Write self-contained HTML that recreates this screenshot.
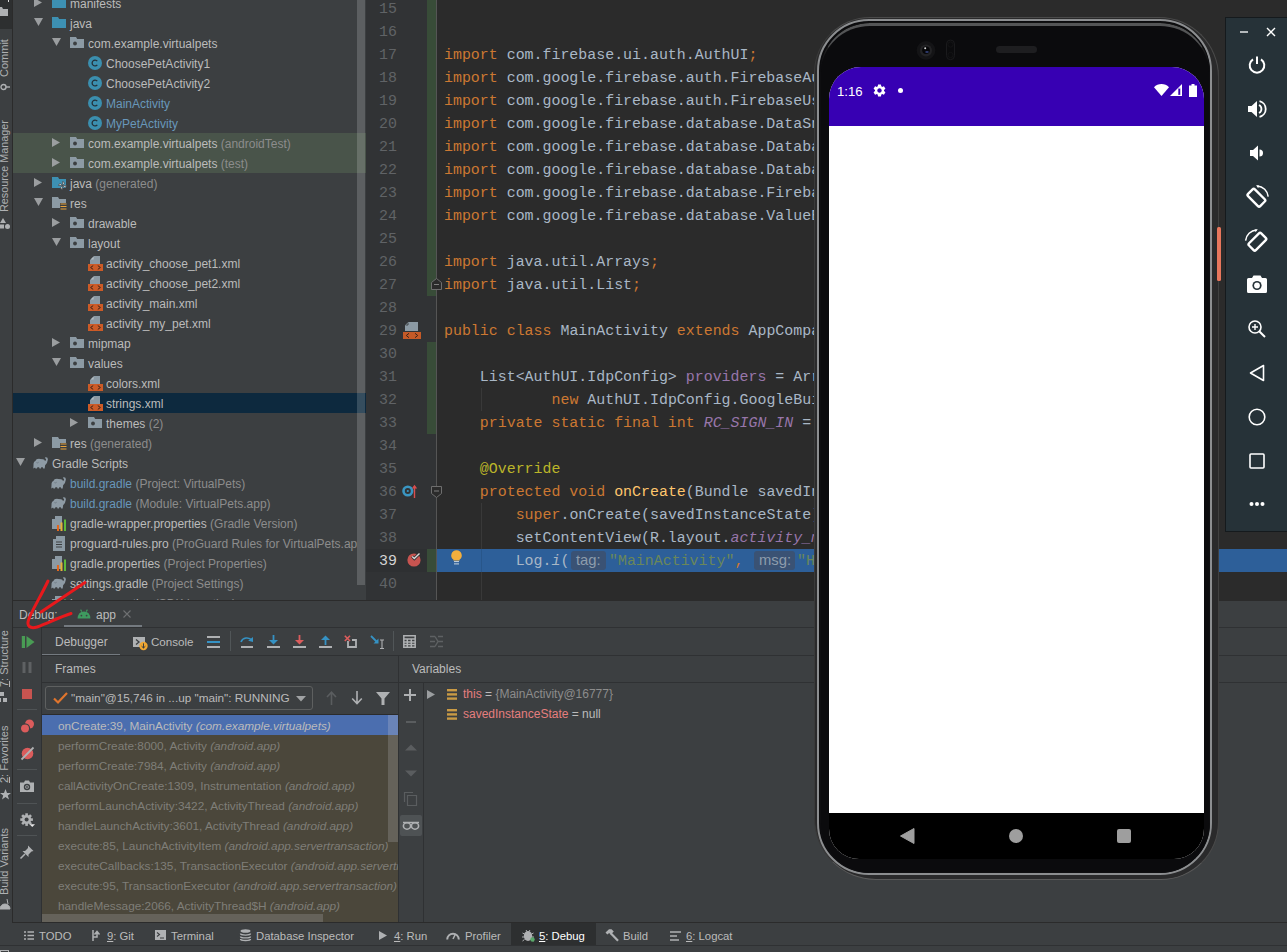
<!DOCTYPE html><html><head><meta charset="utf-8"><style>
*{margin:0;padding:0;box-sizing:border-box}
html,body{width:1287px;height:952px;overflow:hidden;background:#3C3F41}
body{position:relative;font-family:"Liberation Sans",sans-serif;font-size:12px;color:#BBBBBB}
.a{position:absolute}
svg{position:absolute;overflow:visible}
.t{position:absolute;white-space:pre;line-height:20px}
.g{color:#8C8C8C}
.bl{color:#6897BB}
.code{font-family:"Liberation Mono",monospace;font-size:14.93px;white-space:pre;position:absolute;line-height:23px;color:#A9B7C6}
.k{color:#CC7832}
.f{color:#9876AA}
.fi{color:#9876AA;font-style:italic}
.an{color:#BBB529}
.fn{color:#FFC66D}
.s{color:#6A8759}
.ln{font-family:"Liberation Mono",monospace;font-size:14.93px;color:#606366;position:absolute;line-height:23px;text-align:right;width:40px}
</style></head><body>

<svg width="0" height="0" style="position:absolute">
<defs>
<symbol id="tr" viewBox="0 0 8 9"><polygon points="0,0 8,4.5 0,9" fill="#9B9EA0"/></symbol>
<symbol id="td" viewBox="0 0 9 8"><polygon points="0,0 9,0 4.5,8" fill="#9B9EA0"/></symbol>
<symbol id="fb" viewBox="0 0 14 11"><path d="M0 0h6l1.2 2H14v9H0z" fill="#3D90B2"/></symbol>
<symbol id="fg" viewBox="0 0 14 11"><path d="M0 0h6l1.2 2H14v9H0z" fill="#8C9AA4"/></symbol>
<symbol id="fp" viewBox="0 0 14 11"><path d="M0 0h6l1.2 2H14v9H0z" fill="#8C9AA4"/><circle cx="5" cy="6.5" r="1.9" fill="#3C3F41"/></symbol>
<symbol id="cls" viewBox="0 0 14 14"><circle cx="7" cy="7" r="7" fill="#3B8FAF"/><path d="M9.3 5.2A2.9 2.9 0 1 0 9.3 8.8" fill="none" stroke="#23313A" stroke-width="1.3"/></symbol>
<symbol id="xml" viewBox="0 0 16 16"><path d="M7 1H13V9H3V5z" fill="#8C9AA4"/><path d="M3.6 4.6L6.6 1.6V4.6z" fill="#B4BEC4"/><rect x="1" y="9" width="15" height="7" fill="#CC5B27"/><path d="M6.2 10.6L3.6 12.5 6.2 14.4M10.8 10.6L13.4 12.5 10.8 14.4" fill="none" stroke="#3C2318" stroke-width="1"/></symbol>
<symbol id="ele" viewBox="0 0 15 12"><path d="M0.3 11.6L0.6 6.2Q0.9 4.4 2.4 3.9L3.3 2.6Q4.4 1.7 7 1.9L10 2.3Q11.6 2.6 12 4.1Q12.9 3.5 13.1 2.2Q13.1 1.3 12.2 1.4L11.9 0.5Q14.9 -0.3 14.9 2.6Q14.6 6.2 12.1 8.2L11.7 11.6H10.2L9.8 10.2H8.2L7.9 11.6H6.5L6.1 10.2H4.4L4 11.6H2.4L2.1 10.4z" fill="#8E9BA5"/><path d="M3.4 5.6Q4.6 6.4 5.7 5.2" fill="none" stroke="#5F6A72" stroke-width="0.6"/></symbol>
<symbol id="prop" viewBox="0 0 16 16"><path d="M4 1h7v13H1V4z" fill="#8C9AA4"/><path d="M1 1h3v3H1z" fill="#3C3F41"/><rect x="6" y="10" width="2" height="6" fill="#E3671E"/><rect x="9.5" y="7.5" width="2" height="8.5" fill="#E8B13A"/><rect x="13" y="4.5" width="2" height="11.5" fill="#5DBA3A"/></symbol>
<symbol id="txt" viewBox="0 0 16 16"><path d="M5 1h9v15H2V4z" fill="#8C9AA4"/><path d="M2 1h3v3H2z" fill="#3C3F41"/><path d="M5 7h6M5 9.5h6M5 12h6" stroke="#3C3F41" stroke-width="1"/></symbol>
</defs></svg>

<div class="a" style="left:13px;top:0;width:353px;height:600px;background:#3C3F41;overflow:hidden">
<div class="a" style="left:0;top:133px;width:353px;height:40px;background:#49544A"></div>
<div class="a" style="left:0;top:393px;width:353px;height:20px;background:#0D293E"></div>
<div class="a" style="left:0;top:0;width:344px;height:600px;overflow:hidden">
<svg style="left:21px;top:-2px" width="8" height="9"><use href="#tr" width="8" height="9"/></svg>
<svg style="left:39px;top:-3px" width="14" height="11"><use href="#fb" width="14" height="11"/></svg>
<div class="t" style="left:57px;top:-6px">manifests</div>
<svg style="left:21px;top:18px" width="9" height="8"><use href="#td" width="9" height="8"/></svg>
<svg style="left:39px;top:17px" width="14" height="11"><use href="#fb" width="14" height="11"/></svg>
<div class="t" style="left:57px;top:14px">java</div>
<svg style="left:39px;top:38px" width="9" height="8"><use href="#td" width="9" height="8"/></svg>
<svg style="left:57px;top:37px" width="14" height="11"><use href="#fp" width="14" height="11"/></svg>
<div class="t" style="left:75px;top:34px">com.example.virtualpets</div>
<svg style="left:75px;top:56px" width="14" height="14"><use href="#cls" width="14" height="14"/></svg>
<div class="t" style="left:93px;top:54px">ChoosePetActivity1</div>
<svg style="left:75px;top:76px" width="14" height="14"><use href="#cls" width="14" height="14"/></svg>
<div class="t" style="left:93px;top:74px">ChoosePetActivity2</div>
<svg style="left:75px;top:96px" width="14" height="14"><use href="#cls" width="14" height="14"/></svg>
<div class="t" style="left:93px;top:94px"><span class="bl">MainActivity</span></div>
<svg style="left:75px;top:116px" width="14" height="14"><use href="#cls" width="14" height="14"/></svg>
<div class="t" style="left:93px;top:114px"><span class="bl">MyPetActivity</span></div>
<svg style="left:39px;top:138px" width="8" height="9"><use href="#tr" width="8" height="9"/></svg>
<svg style="left:57px;top:137px" width="14" height="11"><use href="#fp" width="14" height="11"/></svg>
<div class="t" style="left:75px;top:134px">com.example.virtualpets <span class="g">(androidTest)</span></div>
<svg style="left:39px;top:158px" width="8" height="9"><use href="#tr" width="8" height="9"/></svg>
<svg style="left:57px;top:157px" width="14" height="11"><use href="#fp" width="14" height="11"/></svg>
<div class="t" style="left:75px;top:154px">com.example.virtualpets <span class="g">(test)</span></div>
<svg style="left:21px;top:178px" width="8" height="9"><use href="#tr" width="8" height="9"/></svg>
<svg style="left:39px;top:177px" width="14" height="11"><use href="#fb" width="14" height="11"/></svg>
<svg style="left:45px;top:181px" width="9" height="9" viewBox="0 0 9 9"><g fill="#B9C1C6" stroke="#3C3F41" stroke-width="0.6"><path d="M4.5 4.5L4.5 0.5A2 2 0 0 1 6.5 2.5z"/><path d="M4.5 4.5L8.5 4.5A2 2 0 0 1 6.5 6.5z"/><path d="M4.5 4.5L4.5 8.5A2 2 0 0 1 2.5 6.5z"/><path d="M4.5 4.5L0.5 4.5A2 2 0 0 1 2.5 2.5z"/></g></svg>
<div class="t" style="left:57px;top:174px">java <span class="g">(generated)</span></div>
<svg style="left:21px;top:198px" width="9" height="8"><use href="#td" width="9" height="8"/></svg>
<svg style="left:39px;top:197px" width="14" height="11"><use href="#fg" width="14" height="11"/></svg>
<div class="a" style="left:47px;top:203px;width:7px;height:8px;background:#3C3F41"></div>
<svg style="left:47px;top:203px" width="7" height="8" viewBox="0 0 7 8"><path d="M0.5 1h6M0.5 3.5h6M0.5 6h6" stroke="#E8A33C" stroke-width="1.1"/></svg>
<div class="t" style="left:57px;top:194px">res</div>
<svg style="left:39px;top:218px" width="8" height="9"><use href="#tr" width="8" height="9"/></svg>
<svg style="left:57px;top:217px" width="14" height="11"><use href="#fp" width="14" height="11"/></svg>
<div class="t" style="left:75px;top:214px">drawable</div>
<svg style="left:39px;top:238px" width="9" height="8"><use href="#td" width="9" height="8"/></svg>
<svg style="left:57px;top:237px" width="14" height="11"><use href="#fp" width="14" height="11"/></svg>
<div class="t" style="left:75px;top:234px">layout</div>
<svg style="left:74px;top:255px" width="16" height="16"><use href="#xml" width="16" height="16"/></svg>
<div class="t" style="left:93px;top:254px">activity_choose_pet1.xml</div>
<svg style="left:74px;top:275px" width="16" height="16"><use href="#xml" width="16" height="16"/></svg>
<div class="t" style="left:93px;top:274px">activity_choose_pet2.xml</div>
<svg style="left:74px;top:295px" width="16" height="16"><use href="#xml" width="16" height="16"/></svg>
<div class="t" style="left:93px;top:294px">activity_main.xml</div>
<svg style="left:74px;top:315px" width="16" height="16"><use href="#xml" width="16" height="16"/></svg>
<div class="t" style="left:93px;top:314px">activity_my_pet.xml</div>
<svg style="left:39px;top:338px" width="8" height="9"><use href="#tr" width="8" height="9"/></svg>
<svg style="left:57px;top:337px" width="14" height="11"><use href="#fp" width="14" height="11"/></svg>
<div class="t" style="left:75px;top:334px">mipmap</div>
<svg style="left:39px;top:358px" width="9" height="8"><use href="#td" width="9" height="8"/></svg>
<svg style="left:57px;top:357px" width="14" height="11"><use href="#fp" width="14" height="11"/></svg>
<div class="t" style="left:75px;top:354px">values</div>
<svg style="left:74px;top:375px" width="16" height="16"><use href="#xml" width="16" height="16"/></svg>
<div class="t" style="left:93px;top:374px">colors.xml</div>
<svg style="left:74px;top:395px" width="16" height="16"><use href="#xml" width="16" height="16"/></svg>
<div class="t" style="left:93px;top:394px">strings.xml</div>
<svg style="left:57px;top:418px" width="8" height="9"><use href="#tr" width="8" height="9"/></svg>
<svg style="left:75px;top:417px" width="14" height="11"><use href="#fp" width="14" height="11"/></svg>
<div class="t" style="left:93px;top:414px">themes <span class="g">(2)</span></div>
<svg style="left:21px;top:438px" width="8" height="9"><use href="#tr" width="8" height="9"/></svg>
<svg style="left:39px;top:437px" width="14" height="11"><use href="#fg" width="14" height="11"/></svg>
<div class="a" style="left:47px;top:443px;width:7px;height:8px;background:#3C3F41"></div>
<svg style="left:47px;top:443px" width="7" height="8" viewBox="0 0 7 8"><path d="M0.5 1h6M0.5 3.5h6M0.5 6h6" stroke="#E8A33C" stroke-width="1.1"/></svg>
<div class="t" style="left:57px;top:434px">res <span class="g">(generated)</span></div>
<svg style="left:3px;top:458px" width="9" height="8"><use href="#td" width="9" height="8"/></svg>
<svg style="left:20px;top:457px" width="15" height="12"><use href="#ele" width="15" height="12"/></svg>
<div class="t" style="left:39px;top:454px">Gradle Scripts</div>
<svg style="left:38px;top:477px" width="15" height="12"><use href="#ele" width="15" height="12"/></svg>
<div class="t" style="left:57px;top:474px"><span class="bl">build.gradle</span> <span class="g">(Project: VirtualPets)</span></div>
<svg style="left:38px;top:497px" width="15" height="12"><use href="#ele" width="15" height="12"/></svg>
<div class="t" style="left:57px;top:494px"><span class="bl">build.gradle</span> <span class="g">(Module: VirtualPets.app)</span></div>
<svg style="left:38px;top:515px" width="16" height="16"><use href="#prop" width="16" height="16"/></svg>
<div class="t" style="left:57px;top:514px">gradle-wrapper.properties <span class="g">(Gradle Version)</span></div>
<svg style="left:38px;top:535px" width="16" height="16"><use href="#txt" width="16" height="16"/></svg>
<div class="t" style="left:57px;top:534px">proguard-rules.pro <span class="g">(ProGuard Rules for VirtualPets.app)</span></div>
<svg style="left:38px;top:555px" width="16" height="16"><use href="#prop" width="16" height="16"/></svg>
<div class="t" style="left:57px;top:554px">gradle.properties <span class="g">(Project Properties)</span></div>
<svg style="left:38px;top:577px" width="15" height="12"><use href="#ele" width="15" height="12"/></svg>
<div class="t" style="left:57px;top:574px">settings.gradle <span class="g">(Project Settings)</span></div>
<svg style="left:38px;top:595px" width="16" height="16"><use href="#prop" width="16" height="16"/></svg>
<div class="t" style="left:57px;top:594px">local.properties <span class="g">(SDK Location)</span></div>
</div>
<div class="a" style="left:344px;top:0;width:8px;height:585px;background:rgba(255,255,255,0.17)"></div>
</div>
<div class="a" style="left:366px;top:0;width:71px;height:600px;background:#313335"></div>
<div class="a" style="left:366px;top:549px;width:61px;height:23px;background:#2E3032"></div>
<div class="a" style="left:437px;top:0;width:850px;height:600px;background:#2B2B2B;overflow:hidden">
<div class="a" style="left:0;top:549px;width:850px;height:23px;background:#2D5F99"></div>
</div>
<div class="a" style="left:481px;top:388px;width:1px;height:23px;background:#393939"></div>
<div class="a" style="left:481px;top:503px;width:1px;height:46px;background:#393939"></div>
<div class="a" style="left:481px;top:549px;width:1px;height:23px;background:#28568A"></div>
<div class="a" style="left:481px;top:572px;width:1px;height:28px;background:#393939"></div>
<div class="a" style="left:436px;top:0;width:1px;height:600px;background:#555555"></div>
<div class="a" style="left:427px;top:0;width:9px;height:296px;background:#384C38"></div>
<div class="a" style="left:427px;top:342px;width:9px;height:92px;background:#384C38"></div>
<div class="a" style="left:427px;top:549px;width:9px;height:23px;background:#384C38"></div>
<svg style="left:431px;top:278px" width="11" height="12" viewBox="0 0 11 12"><path d="M0.5 11.5V4.5L5.5 0.5 10.5 4.5V11.5z" fill="#2B2B2B" stroke="#6E6E6E" stroke-width="1"/><path d="M3 6.5H8" stroke="#7E7E7E" stroke-width="1"/></svg>
<svg style="left:431px;top:486px" width="11" height="12" viewBox="0 0 11 12"><path d="M0.5 0.5V7.5L5.5 11.5 10.5 7.5V0.5z" fill="#2B2B2B" stroke="#6E6E6E" stroke-width="1"/><path d="M3 5H8" stroke="#7E7E7E" stroke-width="1"/></svg>
<svg style="left:403px;top:322px" width="18" height="17" viewBox="0 0 18 17"><path d="M5 0H15V9H2V3z" fill="#8C9AA4"/><path d="M2 0H5L2 3z" fill="#313335"/><path d="M2.5 3H5V0.5" fill="none" stroke="#313335" stroke-width="0.8"/><rect x="0" y="10" width="18" height="7" fill="#C55A27"/><path d="M6 11.3L3.3 13.5 6 15.7M12 11.3L14.7 13.5 12 15.7" fill="none" stroke="#3C2318" stroke-width="1"/></svg>
<svg style="left:402px;top:484px" width="18" height="15" viewBox="0 0 18 15"><circle cx="5.8" cy="7" r="4.3" fill="none" stroke="#3A96C2" stroke-width="2.6"/><circle cx="5.8" cy="7" r="1.1" fill="#3A96C2"/><path d="M12.5 14V2" stroke="#D94E4E" stroke-width="1.4"/><path d="M9.8 4.5L12.5 0.8 15.2 4.5z" fill="#D94E4E"/></svg>
<svg style="left:407px;top:552px" width="15" height="15" viewBox="0 0 15 15"><circle cx="7" cy="8" r="6.6" fill="#C75450"/><path d="M5.2 4.5L7.3 6.6 12.5 1.4" fill="none" stroke="#2E3032" stroke-width="3"/><path d="M5.2 4.5L7.3 6.6 12.5 1.4" fill="none" stroke="#D8D8D8" stroke-width="1.4"/></svg>
<svg style="left:451px;top:550px" width="11" height="15" viewBox="0 0 11 15"><path d="M5.5 0.2A5.2 5.2 0 0 1 8.6 9.6V10.4H2.4V9.6A5.2 5.2 0 0 1 5.5 0.2z" fill="#F4AF3D"/><path d="M3 11.6H8M3 13.9H8" stroke="#DDE3EA" stroke-width="0.9"/></svg>
<div class="ln" style="left:357px;top:-2px;color:#606366">15</div>
<div class="ln" style="left:357px;top:21px;color:#606366">16</div>
<div class="ln" style="left:357px;top:44px;color:#606366">17</div>
<div class="code" style="left:444px;top:44px"><span class="k">import </span>com.firebase.ui.auth.AuthUI<span class="k">;</span></div>
<div class="ln" style="left:357px;top:67px;color:#606366">18</div>
<div class="code" style="left:444px;top:67px"><span class="k">import </span>com.google.firebase.auth.FirebaseAuth<span class="k">;</span></div>
<div class="ln" style="left:357px;top:90px;color:#606366">19</div>
<div class="code" style="left:444px;top:90px"><span class="k">import </span>com.google.firebase.auth.FirebaseUser<span class="k">;</span></div>
<div class="ln" style="left:357px;top:113px;color:#606366">20</div>
<div class="code" style="left:444px;top:113px"><span class="k">import </span>com.google.firebase.database.DataSnapshot<span class="k">;</span></div>
<div class="ln" style="left:357px;top:136px;color:#606366">21</div>
<div class="code" style="left:444px;top:136px"><span class="k">import </span>com.google.firebase.database.DatabaseError<span class="k">;</span></div>
<div class="ln" style="left:357px;top:159px;color:#606366">22</div>
<div class="code" style="left:444px;top:159px"><span class="k">import </span>com.google.firebase.database.DatabaseReference<span class="k">;</span></div>
<div class="ln" style="left:357px;top:182px;color:#606366">23</div>
<div class="code" style="left:444px;top:182px"><span class="k">import </span>com.google.firebase.database.FirebaseDatabase<span class="k">;</span></div>
<div class="ln" style="left:357px;top:205px;color:#606366">24</div>
<div class="code" style="left:444px;top:205px"><span class="k">import </span>com.google.firebase.database.ValueEventListener<span class="k">;</span></div>
<div class="ln" style="left:357px;top:228px;color:#606366">25</div>
<div class="ln" style="left:357px;top:251px;color:#606366">26</div>
<div class="code" style="left:444px;top:251px"><span class="k">import </span>java.util.Arrays<span class="k">;</span></div>
<div class="ln" style="left:357px;top:274px;color:#606366">27</div>
<div class="code" style="left:444px;top:274px"><span class="k">import </span>java.util.List<span class="k">;</span></div>
<div class="ln" style="left:357px;top:297px;color:#606366">28</div>
<div class="ln" style="left:357px;top:320px;color:#606366">29</div>
<div class="code" style="left:444px;top:320px"><span class="k">public class </span>MainActivity <span class="k">extends </span>AppCompatActivity {</div>
<div class="ln" style="left:357px;top:343px;color:#606366">30</div>
<div class="ln" style="left:357px;top:366px;color:#606366">31</div>
<div class="code" style="left:444px;top:366px">    List&lt;AuthUI.IdpConfig&gt; <span class="f">providers </span>= Arrays.<span style="font-style:italic">asList</span>(</div>
<div class="ln" style="left:357px;top:389px;color:#606366">32</div>
<div class="code" style="left:444px;top:389px">            <span class="k">new </span>AuthUI.IdpConfig.GoogleBuilder().build())<span class="k">;</span></div>
<div class="ln" style="left:357px;top:412px;color:#606366">33</div>
<div class="code" style="left:444px;top:412px">    <span class="k">private static final int </span><span class="fi">RC_SIGN_IN </span>= <span style="color:#6897BB">123</span><span class="k">;</span></div>
<div class="ln" style="left:357px;top:435px;color:#606366">34</div>
<div class="ln" style="left:357px;top:458px;color:#606366">35</div>
<div class="code" style="left:444px;top:458px">    <span class="an">@Override</span></div>
<div class="ln" style="left:357px;top:481px;color:#606366">36</div>
<div class="code" style="left:444px;top:481px">    <span class="k">protected void </span><span class="fn">onCreate</span>(Bundle savedInstanceState) {</div>
<div class="ln" style="left:357px;top:504px;color:#606366">37</div>
<div class="code" style="left:444px;top:504px">        <span class="k">super</span>.onCreate(savedInstanceState)<span class="k">;</span></div>
<div class="ln" style="left:357px;top:527px;color:#606366">38</div>
<div class="code" style="left:444px;top:527px">        setContentView(R.layout.<span class="fi">activity_main</span>)<span class="k">;</span></div>
<div class="ln" style="left:357px;top:550px;color:#D4D4D4">39</div>
<div class="ln" style="left:357px;top:573px;color:#606366">40</div>
<div class="code" style="left:444px;top:550px">        Log.<i>i</i>(</div>
<div class="a" style="left:571px;top:551px;width:35px;height:19px;border-radius:3px;background:#3A5274"></div>
<div class="a" style="left:576px;top:551px;font-size:14.8px;line-height:19px;color:#8D9CAC;white-space:pre">tag:</div>
<div class="code" style="left:609px;top:550px"><span class="s">"MainActivity"</span><span class="k">,</span></div>
<div class="a" style="left:754px;top:551px;width:41px;height:19px;border-radius:3px;background:#3A5274"></div>
<div class="a" style="left:759px;top:551px;font-size:14.8px;line-height:19px;color:#8D9CAC;white-space:pre">msg:</div>
<div class="code" style="left:797px;top:550px"><span class="s">"Hello world"</span><span class="k">)</span></div>
<div class="a" style="left:13px;top:600px;width:1274px;height:323px;background:#3C3F41"></div>
<div class="a" style="left:13px;top:600px;width:1274px;height:1px;background:#2B2B2B"></div>
<div class="t" style="left:19px;top:605px;font-size:12px">Debug:</div>
<svg style="left:77px;top:609px" width="14" height="10" viewBox="0 0 14 10"><path d="M3.6 0.6L4.8 2.6M10.4 0.6L9.2 2.6" stroke="#3E9A5F" stroke-width="1.1"/><path d="M0.6 9.6Q1 2.8 7 2.6Q13 2.8 13.4 9.6z" fill="#3E9A5F"/><circle cx="4.4" cy="6.6" r="0.9" fill="#3C3F41"/><circle cx="9.6" cy="6.6" r="0.9" fill="#3C3F41"/></svg>
<div class="t" style="left:96px;top:605px;font-size:12px">app</div>
<svg style="left:123px;top:610px" width="8" height="8" viewBox="0 0 8 8"><path d="M0.5 0.5L7.5 7.5M7.5 0.5L0.5 7.5" stroke="#6F7172" stroke-width="1.1"/></svg>
<div class="a" style="left:64px;top:625px;width:78px;height:3px;background:#747A80"></div>
<div class="a" style="left:13px;top:627px;width:1274px;height:1px;background:#2F3133"></div>
<div class="a" style="left:41px;top:628px;width:1px;height:295px;background:#2F3133"></div>
<div class="t" style="left:55px;top:632px;font-size:12px">Debugger</div>
<div class="a" style="left:42px;top:654px;width:78px;height:2px;background:#747A80"></div>
<svg style="left:133px;top:636px" width="16" height="15" viewBox="0 0 16 15"><rect x="0" y="1" width="12" height="10" fill="#AFB1B3"/><path d="M3 3.5L6 6 3 8.5" fill="none" stroke="#3C3F41" stroke-width="1.3"/><circle cx="10.5" cy="10" r="4.2" fill="#F0A732"/><path d="M10.5 7.3V12M8.6 10.2L10.5 12 12.4 10.2" fill="none" stroke="#3C3F41" stroke-width="1"/></svg>
<div class="t" style="left:151px;top:632px;font-size:11.6px">Console</div>
<svg style="left:207px;top:636px" width="13" height="12" viewBox="0 0 13 12"><rect y="0" width="13" height="2" fill="#AFB1B3"/><rect y="5" width="13" height="2" fill="#3592C4"/><rect y="10" width="13" height="2" fill="#AFB1B3"/></svg>
<div class="a" style="left:230px;top:631px;width:1px;height:20px;background:#515658"></div>
<svg style="left:240px;top:635px" width="14" height="13" viewBox="0 0 14 13"><path d="M1 7C2.5 2.5 9 1.5 12 5.5" fill="none" stroke="#3592C4" stroke-width="1.6"/><path d="M8.2 5.8L13 7 13 2" fill="#3592C4"/><rect x="1" y="11" width="12" height="2" fill="#AFB1B3"/></svg>
<svg style="left:267px;top:635px" width="13" height="13" viewBox="0 0 13 13"><rect x="5.6" y="0" width="1.8" height="6" fill="#3592C4"/><path d="M2 5H11L6.5 9.5z" fill="#3592C4"/><rect x="0" y="11" width="13" height="2" fill="#AFB1B3"/></svg>
<svg style="left:293px;top:635px" width="13" height="13" viewBox="0 0 13 13"><rect x="5.6" y="0" width="1.8" height="6" fill="#DB5C5C"/><path d="M2 5H11L6.5 9.5z" fill="#DB5C5C"/><rect x="0" y="11" width="13" height="2" fill="#AFB1B3"/></svg>
<svg style="left:319px;top:635px" width="13" height="13" viewBox="0 0 13 13"><rect x="5.6" y="4" width="1.8" height="6" fill="#3592C4"/><path d="M2 5H11L6.5 0.5z" fill="#3592C4"/><rect x="0" y="11" width="13" height="2" fill="#AFB1B3"/></svg>
<svg style="left:344px;top:635px" width="13" height="13" viewBox="0 0 13 13"><path d="M4 6V12H12V5H8" fill="none" stroke="#AFB1B3" stroke-width="1.8"/><path d="M0.8 0.8L6 6M6 0.8L0.8 6" stroke="#DB5C5C" stroke-width="1.6"/></svg>
<svg style="left:370px;top:635px" width="15" height="14" viewBox="0 0 15 14"><path d="M1 1L7.5 7.5" stroke="#3592C4" stroke-width="1.8"/><path d="M3.5 8.5H8.5V3.5z" fill="#3592C4"/><path d="M10 5H14M12 5V13.5M10 13.5H14" fill="none" stroke="#AFB1B3" stroke-width="1.1"/></svg>
<div class="a" style="left:393px;top:631px;width:1px;height:20px;background:#515658"></div>
<svg style="left:403px;top:635px" width="13" height="13" viewBox="0 0 13 13"><path d="M0.8 0.8H12.2V12.2H0.8z M0.8 4H12.2 M0.8 7H12.2M0.8 9.6H12.2 M4.3 4V12.2M8.3 4V12.2" fill="none" stroke="#AFB1B3" stroke-width="1.5"/></svg>
<svg style="left:430px;top:635px" width="13" height="13" viewBox="0 0 13 13"><path d="M0 1.5H5M0 6.5H5M0 11.5H5M8 1.5H13M8 6.5H13M8 11.5H13M5 1.5L8 6.5 5 11.5" fill="none" stroke="#5E6163" stroke-width="1.4"/></svg>
<div class="a" style="left:42px;top:655px;width:1245px;height:1px;background:#2F3133"></div>
<div class="t" style="left:55px;top:659px;font-size:12px">Frames</div>
<div class="a" style="left:398px;top:656px;width:1px;height:267px;background:#2F3133"></div>
<div class="t" style="left:412px;top:659px;font-size:12px">Variables</div>
<div class="a" style="left:42px;top:682px;width:1245px;height:1px;background:#2F3133"></div>
<div class="a" style="left:45px;top:686px;width:268px;height:24px;border:1px solid #5E6060;border-radius:3px;background:#3C3F41"></div>
<svg style="left:53px;top:692px" width="15" height="12" viewBox="0 0 15 12"><path d="M1 6.5L5 10.5 14 1" fill="none" stroke="#E0752D" stroke-width="2.2"/></svg>
<div class="t" style="left:71px;top:688px;font-size:11.75px;color:#BBBBBB">"main"@15,746 in ...up "main": RUNNING</div>
<svg style="left:296px;top:696px" width="10" height="6" viewBox="0 0 10 6"><path d="M0 0H10L5 5.5z" fill="#A0A2A4"/></svg>
<svg style="left:326px;top:691px" width="11" height="14" viewBox="0 0 11 14"><path d="M5.5 2V14M1 6L5.5 1.2 10 6" fill="none" stroke="#5A5D5F" stroke-width="1.6"/></svg>
<svg style="left:351px;top:691px" width="12" height="14" viewBox="0 0 12 14"><path d="M6 0V12M1.2 7.5L6 12.5 10.8 7.5" fill="none" stroke="#AFB1B3" stroke-width="1.6"/></svg>
<svg style="left:376px;top:692px" width="14" height="13" viewBox="0 0 14 13"><path d="M0 0H14L8.5 6.5V13H5.5V6.5z" fill="#AFB1B3"/></svg>
<div class="a" style="left:42px;top:714px;width:356px;height:1px;background:#2B2B2B"></div>
<div class="a" style="left:42px;top:715px;width:356px;height:208px;background:#4B473B;overflow:hidden">
<div class="a" style="left:0;top:0;width:356px;height:20px;background:#4B6EAF"></div>
<div class="t" style="left:16px;top:1px;font-size:11.8px;color:#BBBBBB">onCreate:39, MainActivity <i>(com.example.virtualpets)</i></div>
<div class="t" style="left:16px;top:21px;font-size:11.8px;color:#7F7E78">performCreate:8000, Activity <i>(android.app)</i></div>
<div class="t" style="left:16px;top:41px;font-size:11.8px;color:#7F7E78">performCreate:7984, Activity <i>(android.app)</i></div>
<div class="t" style="left:16px;top:61px;font-size:11.8px;color:#7F7E78">callActivityOnCreate:1309, Instrumentation <i>(android.app)</i></div>
<div class="t" style="left:16px;top:81px;font-size:11.8px;color:#7F7E78">performLaunchActivity:3422, ActivityThread <i>(android.app)</i></div>
<div class="t" style="left:16px;top:101px;font-size:11.8px;color:#7F7E78">handleLaunchActivity:3601, ActivityThread <i>(android.app)</i></div>
<div class="t" style="left:16px;top:121px;font-size:11.8px;color:#7F7E78">execute:85, LaunchActivityItem <i>(android.app.servertransaction)</i></div>
<div class="t" style="left:16px;top:141px;font-size:11.8px;color:#7F7E78">executeCallbacks:135, TransactionExecutor <i>(android.app.servertransaction)</i></div>
<div class="t" style="left:16px;top:161px;font-size:11.8px;color:#7F7E78">execute:95, TransactionExecutor <i>(android.app.servertransaction)</i></div>
<div class="t" style="left:16px;top:181px;font-size:11.8px;color:#7F7E78">handleMessage:2066, ActivityThread$H <i>(android.app)</i></div>
<div class="t" style="left:16px;top:201px;font-size:11.8px;color:#7F7E78">dispatchMessage:106, Handler <i>(android.os)</i></div>
<div class="a" style="left:346px;top:0;width:10px;height:20px;background:#6A84B8"></div>
<div class="a" style="left:346px;top:20px;width:10px;height:107px;background:#65625A"></div>
<div class="a" style="left:0;top:199px;width:281px;height:9px;background:#65625A"></div>
</div>
<div class="a" style="left:423px;top:683px;width:1px;height:240px;background:#2F3133"></div>
<svg style="left:404px;top:689px" width="12" height="12" viewBox="0 0 12 12"><path d="M6 0V12M0 6H12" stroke="#AFB1B3" stroke-width="2"/></svg>
<div class="a" style="left:406px;top:721px;width:10px;height:2px;background:#5A5D5F"></div>
<svg style="left:405px;top:744px" width="12" height="7" viewBox="0 0 12 7"><path d="M0 6.5L6 0.5 12 6.5z" fill="#5A5D5F"/></svg>
<svg style="left:405px;top:770px" width="12" height="7" viewBox="0 0 12 7"><path d="M0 0.5L6 6.5 12 0.5z" fill="#5A5D5F"/></svg>
<svg style="left:404px;top:792px" width="13" height="14" viewBox="0 0 13 14"><path d="M3.5 3.5H12.5V13.5H3.5z M0.5 10V0.5H9" fill="none" stroke="#5A5D5F" stroke-width="1.2"/></svg>
<div class="a" style="left:400px;top:815px;width:22px;height:21px;background:#4E5254;border-radius:2px"></div>
<svg style="left:402px;top:820px" width="18" height="10" viewBox="0 0 18 10"><path d="M1 2.5H17" stroke="#AFB1B3" stroke-width="1.5"/><ellipse cx="5" cy="6" rx="3.6" ry="3.2" fill="none" stroke="#AFB1B3" stroke-width="1.6"/><ellipse cx="13" cy="6" rx="3.6" ry="3.2" fill="none" stroke="#AFB1B3" stroke-width="1.6"/></svg>
<svg style="left:427px;top:690px" width="8" height="9"><use href="#tr" width="8" height="9"/></svg>
<svg style="left:447px;top:689px" width="10" height="11" viewBox="0 0 10 11"><rect y="0" width="10" height="2.4" fill="#C99A45"/><rect y="4.2" width="10" height="2.4" fill="#C99A45"/><rect y="8.4" width="10" height="2.4" fill="#C99A45"/></svg>
<div class="t" style="left:463px;top:684px;font-size:12px"><span style="color:#E57E7E">this</span> = <span style="color:#8C8C8C">{MainActivity@16777}</span></div>
<svg style="left:447px;top:709px" width="10" height="11" viewBox="0 0 10 11"><rect y="0" width="10" height="2.4" fill="#C99A45"/><rect y="4.2" width="10" height="2.4" fill="#C99A45"/><rect y="8.4" width="10" height="2.4" fill="#C99A45"/></svg>
<div class="t" style="left:463px;top:704px;font-size:12px"><span style="color:#E57E7E">savedInstanceState</span> = null</div>
<div class="a" style="left:13px;top:922px;width:1274px;height:1px;background:#2B2B2B"></div>
<div class="a" style="left:0;top:0;width:12px;height:923px;background:#3C3F41"></div>
<div class="a" style="left:0;top:0;width:12px;height:29px;background:#2D2F30"></div>
<div class="a" style="left:8px;top:0;width:1px;height:1.5px;background:#DDD"></div>
<svg style="left:0;top:7px" width="8" height="9" viewBox="0 0 8 9"><path d="M0 0H2L3 2H8V9H0z" fill="#AFB1B3"/></svg>
<div class="a" style="left:12px;top:0;width:1px;height:923px;background:#2B2B2B"></div>
<div class="a" style="left:-1px;top:77px;white-space:pre;font-size:11px;line-height:11px;color:#AFB1B3;transform-origin:0 0;transform:rotate(-90deg)">Commit</div>
<svg style="left:0;top:83px" width="10" height="8" viewBox="0 0 10 8"><circle cx="3.5" cy="4" r="2.5" fill="none" stroke="#AFB1B3" stroke-width="1.4"/><path d="M6 4H10" stroke="#AFB1B3" stroke-width="1.4"/></svg>
<div class="a" style="left:-1px;top:212px;white-space:pre;font-size:10.8px;line-height:11px;color:#AFB1B3;transform-origin:0 0;transform:rotate(-90deg)">Resource Manager</div>
<svg style="left:0;top:218px" width="10" height="11" viewBox="0 0 10 11"><path d="M0 5L3 0 6 5z" fill="#AFB1B3"/><rect x="0" y="6.5" width="4" height="4" fill="#AFB1B3"/><circle cx="7.5" cy="8.5" r="2.5" fill="#AFB1B3"/></svg>
<div class="a" style="left:-1px;top:687px;white-space:pre;font-size:11px;line-height:11px;color:#AFB1B3;transform-origin:0 0;transform:rotate(-90deg)"><u>7</u>: Structure</div>
<svg style="left:-3px;top:692px" width="10" height="11" viewBox="0 0 10 11"><rect x="3" y="0" width="4" height="4" fill="#AFB1B3"/><rect x="0" y="6" width="4" height="4" fill="#AFB1B3"/><rect x="6" y="6" width="4" height="4" fill="#AFB1B3"/></svg>
<div class="a" style="left:-1px;top:783px;white-space:pre;font-size:11px;line-height:11px;color:#AFB1B3;transform-origin:0 0;transform:rotate(-90deg)"><u>2</u>: Favorites</div>
<svg style="left:0;top:789px" width="11" height="11" viewBox="0 0 11 11"><path d="M5.5 0L7 4H11L7.8 6.5 9 10.5 5.5 8 2 10.5 3.2 6.5 0 4H4z" fill="#AFB1B3"/></svg>
<div class="a" style="left:-1px;top:895px;white-space:pre;font-size:11px;line-height:11px;color:#AFB1B3;transform-origin:0 0;transform:rotate(-90deg)">Build Variants</div>
<svg style="left:0;top:899px" width="10" height="10" viewBox="0 0 10 10"><path d="M0 10A5 5 0 0 1 10 10z M7 0L8 5" fill="#AFB1B3" stroke="#AFB1B3"/></svg>
<svg style="left:21px;top:636px" width="14" height="12" viewBox="0 0 14 12"><rect x="0.8" y="0" width="3.2" height="12" fill="#499C54"/><path d="M5.5 0L13.5 6 5.5 12z" fill="#499C54"/></svg>
<svg style="left:22px;top:662px" width="10" height="11" viewBox="0 0 10 11"><rect x="0.5" y="0" width="3" height="11" fill="#5E6163"/><rect x="6.5" y="0" width="3" height="11" fill="#5E6163"/></svg>
<div class="a" style="left:22px;top:689px;width:10px;height:10px;background:#C75450"></div>
<div class="a" style="left:17px;top:709px;width:20px;height:1px;background:#4F5355"></div>
<svg style="left:20px;top:719px" width="15" height="15" viewBox="0 0 15 15"><circle cx="9.5" cy="5" r="4.5" fill="#DB5C5C"/><circle cx="5" cy="9.5" r="4.6" fill="#DB5C5C" stroke="#3C3F41" stroke-width="1.2"/></svg>
<svg style="left:21px;top:747px" width="13" height="13" viewBox="0 0 13 13"><circle cx="6.5" cy="6.5" r="5.8" fill="#DB5C5C"/><path d="M0.5 12.5L12.5 0.5" stroke="#AFB1B3" stroke-width="1.8"/></svg>
<div class="a" style="left:17px;top:769px;width:20px;height:1px;background:#4F5355"></div>
<svg style="left:20px;top:780px" width="14" height="12" viewBox="0 0 14 12"><path d="M0 2.5H4L5 0.5H9L10 2.5H14V12H0z" fill="#AFB1B3"/><circle cx="7" cy="7" r="3.2" fill="#3C3F41"/><circle cx="7" cy="7" r="1.8" fill="#AFB1B3"/><circle cx="7" cy="7" r="0.9" fill="#3C3F41"/></svg>
<div class="a" style="left:17px;top:803px;width:20px;height:1px;background:#4F5355"></div>
<svg style="left:20px;top:813px" width="15" height="15" viewBox="0 0 15 15"><g fill="#AFB1B3"><rect x="5.3" y="0.3" width="2.6" height="3" transform="rotate(0 6.6 6.6)"/><rect x="5.3" y="0.3" width="2.6" height="3" transform="rotate(45 6.6 6.6)"/><rect x="5.3" y="0.3" width="2.6" height="3" transform="rotate(90 6.6 6.6)"/><rect x="5.3" y="0.3" width="2.6" height="3" transform="rotate(135 6.6 6.6)"/><rect x="5.3" y="0.3" width="2.6" height="3" transform="rotate(180 6.6 6.6)"/><rect x="5.3" y="0.3" width="2.6" height="3" transform="rotate(225 6.6 6.6)"/><rect x="5.3" y="0.3" width="2.6" height="3" transform="rotate(270 6.6 6.6)"/><rect x="5.3" y="0.3" width="2.6" height="3" transform="rotate(315 6.6 6.6)"/><circle cx="6.6" cy="6.6" r="4.6"/></g><circle cx="6.6" cy="6.6" r="2" fill="#3C3F41"/><path d="M9.5 11.2H15L12.25 14z" fill="#E8E8E8"/></svg>
<div class="a" style="left:17px;top:835px;width:20px;height:1px;background:#4F5355"></div>
<svg style="left:20px;top:845px" width="14" height="15" viewBox="0 0 14 15"><path d="M8 0.5L13.5 6 11.5 6.5 8.5 9.5 8.5 12 2.5 6 5 6 8 3z" fill="#AFB1B3"/><path d="M5 9L0.5 13.5" stroke="#AFB1B3" stroke-width="1.6"/></svg>
<div class="a" style="left:0;top:923px;width:1287px;height:22px;background:#3C3F41"></div>
<div class="a" style="left:511px;top:923px;width:85px;height:22px;background:#2D2F30"></div>
<div class="a" style="left:0;top:945px;width:1287px;height:1px;background:#2F3133"></div>
<div class="a" style="left:0;top:946px;width:1287px;height:6px;background:#3C3F41"></div>
<div class="a" style="left:0;top:950px;width:9px;height:6px;border:1px solid #AFB1B3"></div>
<svg style="left:24px;top:931px" width="10" height="9" viewBox="0 0 10 9"><path d="M0 1H2M3.5 1H10M0 4.5H2M3.5 4.5H10M0 8H2M3.5 8H10" stroke="#AFB1B3" stroke-width="1.3"/></svg>
<div class="t" style="left:39px;top:926px;font-size:11.3px;color:#BBBBBB;">TODO</div>
<svg style="left:92px;top:930px" width="10" height="11" viewBox="0 0 10 11"><path d="M1 0V11M1 7H5V2.5M2.5 4.5L5 1.5 7.5 4.5" fill="none" stroke="#AFB1B3" stroke-width="1.5"/></svg>
<div class="t" style="left:107px;top:926px;font-size:11.3px;color:#BBBBBB;"><u>9</u>: Git</div>
<svg style="left:155px;top:930px" width="11" height="10" viewBox="0 0 11 10"><rect width="11" height="10" fill="#AFB1B3"/><path d="M2 2.5L4.5 4.5 2 6.5M5 8H9" fill="none" stroke="#3C3F41" stroke-width="1.1"/></svg>
<div class="t" style="left:171px;top:926px;font-size:11.3px;color:#BBBBBB;">Terminal</div>
<svg style="left:240px;top:929px" width="11" height="12" viewBox="0 0 11 12"><ellipse cx="5.5" cy="2" rx="5" ry="1.8" fill="#AFB1B3"/><path d="M0.5 4.6C0.5 6.6 10.5 6.6 10.5 4.6M0.5 7.4C0.5 9.4 10.5 9.4 10.5 7.4M0.5 10C0.5 12 10.5 12 10.5 10" fill="none" stroke="#AFB1B3" stroke-width="1.4"/></svg>
<div class="t" style="left:256px;top:926px;font-size:11.3px;color:#BBBBBB;">Database Inspector</div>
<svg style="left:379px;top:931px" width="8" height="9" viewBox="0 0 8 9"><path d="M0 0L8 4.5 0 9z" fill="#AFB1B3"/></svg>
<div class="t" style="left:394px;top:926px;font-size:11.3px;color:#BBBBBB;"><u>4</u>: Run</div>
<svg style="left:446px;top:931px" width="14" height="9" viewBox="0 0 14 9"><path d="M1.2 8.5A5.8 5.8 0 0 1 12.8 8.5" fill="none" stroke="#AFB1B3" stroke-width="2"/><path d="M7 8L9.5 3" stroke="#AFB1B3" stroke-width="1.5"/></svg>
<div class="t" style="left:465px;top:926px;font-size:11.3px;color:#BBBBBB;">Profiler</div>
<svg style="left:522px;top:929px" width="13" height="13" viewBox="0 0 13 13"><ellipse cx="6" cy="7" rx="4.2" ry="5" fill="#AFB1B3"/><path d="M0.5 4L2.5 5M11.5 4L9.5 5M0 8H2M10 8H12M0.5 12L2.5 10.5M11.5 12L9.5 10.5M4 1L5 2.5M8 1L7 2.5" stroke="#AFB1B3" stroke-width="1"/><circle cx="10.5" cy="10.5" r="2.2" fill="#59A869"/></svg>
<div class="t" style="left:539px;top:926px;font-size:11.3px;color:#FFFFFF;"><u>5</u>: Debug</div>
<svg style="left:605px;top:929px" width="14" height="13" viewBox="0 0 14 13"><path d="M0.5 3.5L4 0.2H6.5L8.8 2.5 5.8 5.5 4.2 4 2.3 5.4z" fill="#AFB1B3"/><path d="M5.5 4L13 11.8" stroke="#AFB1B3" stroke-width="2.2"/></svg>
<div class="t" style="left:623px;top:926px;font-size:11.3px;color:#BBBBBB;">Build</div>
<svg style="left:670px;top:931px" width="11" height="10" viewBox="0 0 11 10"><path d="M0 1H11M0 5H7M0 9H9" stroke="#AFB1B3" stroke-width="1.5"/></svg>
<div class="t" style="left:686px;top:926px;font-size:11.3px;color:#BBBBBB;"><u>6</u>: Logcat</div>
<div class="a" style="left:814px;top:17px;width:405px;height:863px;border-radius:56px 60px 58px 62px;background:#2A2A2B;border:1.5px solid #4A4A4A;border-left-color:#3A3A3A;border-bottom-color:#5A5A5A"></div>
<div class="a" style="left:1217.5px;top:70px;width:1px;height:760px;background:#404040"></div>
<div class="a" style="left:817px;top:19px;width:395px;height:856px;border-radius:52px;background:#0B0B0D;border:2.5px solid #8C8E90"></div>
<div class="a" style="left:819.5px;top:21.5px;width:390px;height:851px;border-radius:50px;border:1.5px solid #0E0E10;border-top:1.5px solid #111"></div>
<div class="a" style="left:819.5px;top:23px;width:390px;height:60px;border-radius:50px 50px 0 0;border-top:3px solid #545556;border-left:1px solid #2a2a2a;border-right:1px solid #2a2a2a;-webkit-mask-image:linear-gradient(#000 0,#000 30%,transparent 70%)"></div>
<div class="a" style="left:1217px;top:227px;width:3.5px;height:54px;background:#E8765C;border-radius:1.5px"></div>
<svg style="left:910px;top:34px" width="50" height="32" viewBox="910 34 50 32"><circle cx="926" cy="50.4" r="9.3" fill="#141416"/><circle cx="926" cy="50.4" r="6" fill="#232325"/><circle cx="926" cy="50.2" r="3.8" fill="#060608"/><ellipse cx="927" cy="52" rx="1.8" ry="1.1" fill="#3A4A8A" opacity="0.8"/><circle cx="925.2" cy="48.3" r="1" fill="#D8D8D8"/><rect x="946.5" y="40" width="8" height="19.7" rx="4" fill="none" stroke="#1A1A1C" stroke-width="1"/><circle cx="950.5" cy="44.5" r="2.6" fill="none" stroke="#151517" stroke-width="0.8"/><circle cx="950.5" cy="55" r="2.6" fill="none" stroke="#151517" stroke-width="0.8"/></svg>
<div class="a" style="left:996px;top:46px;width:41px;height:7px;border-radius:4px;background:#1E1E20"></div>
<div class="a" style="left:829px;top:67px;width:375px;height:792px;border-radius:32px 32px 30px 30px;overflow:hidden;background:#FFFFFF">
<div class="a" style="left:0;top:0;width:375px;height:59px;background:#3700B3"></div>
<div class="a" style="left:0;top:746px;width:375px;height:46px;background:#000000"></div>
<div class="a" style="left:8px;top:15.5px;font-size:13.2px;line-height:18px;color:#FFFFFF;white-space:pre">1:16</div>
<svg style="left:43px;top:15.5px" width="15" height="15" viewBox="0 0 24 24"><path fill="#FFFFFF" d="M19.14 12.94c.04-.3.06-.61.06-.94 0-.32-.02-.64-.07-.94l2.03-1.58a.49.49 0 0 0 .12-.61l-1.92-3.32a.49.49 0 0 0-.59-.22l-2.39.96c-.5-.38-1.03-.7-1.62-.94l-.36-2.54a.48.48 0 0 0-.48-.41h-3.84c-.24 0-.43.17-.47.41l-.36 2.54c-.59.24-1.13.57-1.62.94l-2.39-.96a.48.48 0 0 0-.59.22L2.74 8.87c-.12.21-.08.47.12.61l2.03 1.58c-.05.3-.09.63-.09.94s.02.64.07.94l-2.03 1.58a.49.49 0 0 0-.12.61l1.92 3.32c.12.22.37.29.59.22l2.39-.96c.5.38 1.03.7 1.62.94l.36 2.54c.05.24.24.41.48.41h3.84c.24 0 .44-.17.47-.41l.36-2.54c.59-.24 1.13-.56 1.62-.94l2.39.96c.22.08.47 0 .59-.22l1.92-3.32c.12-.22.07-.47-.12-.61l-2.01-1.58zM12 15.6c-1.98 0-3.6-1.62-3.6-3.6s1.62-3.6 3.6-3.6 3.6 1.62 3.6 3.6-1.62 3.6-3.6 3.6z"/></svg>
<div class="a" style="left:69px;top:20.5px;width:5px;height:5px;border-radius:50%;background:#FFFFFF"></div>
<svg style="left:325px;top:17px" width="15" height="12" viewBox="0 0 15 12"><path d="M7.5 12L0 3.2C2 1.2 4.6 0 7.5 0S13 1.2 15 3.2z" fill="#FFFFFF"/></svg>
<svg style="left:341px;top:17px" width="12" height="12" viewBox="0 0 12 12"><path d="M0 12L12 0V12z" fill="#FFFFFF"/><rect x="8.3" y="4.5" width="2" height="6.5" fill="#3700B3"/><path d="M8.3 4.8V11H10.3V2.7" fill="#CFC3EE"/><rect x="8.5" y="4.8" width="1.5" height="6" fill="#3700B3"/></svg>
<svg style="left:360px;top:16.5px" width="8" height="13" viewBox="0 0 8 13"><path d="M2.5 0H5.5V1.5H8V13H0V1.5H2.5z" fill="#FFFFFF"/></svg>
<svg style="left:71px;top:761px" width="14" height="16" viewBox="0 0 14 16"><path d="M14 0.5V15.5L0.5 8z" fill="#9E9E9E" stroke="#9E9E9E" stroke-width="1" stroke-linejoin="round"/></svg>
<div class="a" style="left:180px;top:762px;width:14px;height:14px;border-radius:50%;background:#9E9E9E"></div>
<div class="a" style="left:288px;top:762px;width:14px;height:14px;border-radius:2px;background:#9E9E9E"></div>
</div>
<div class="a" style="left:1225px;top:17px;width:62px;height:515px;background:#263238;border:1px solid #151A1D;border-right:none"></div>
<div class="a" style="left:1240px;top:31px;width:8px;height:1.5px;background:#B4B9BC"></div>
<svg style="left:1266px;top:27px" width="10" height="10" viewBox="0 0 10 10"><path d="M1 1L9 9M9 1L1 9" stroke="#FFFFFF" stroke-width="1.4"/></svg>
<svg style="left:1248px;top:56px" width="18" height="18" viewBox="0 0 18 18"><path d="M5 3.3A7.3 7.3 0 1 0 13 3.3" fill="none" stroke="#FFF" stroke-width="2"/><path d="M9 0.5V8" stroke="#FFF" stroke-width="2"/></svg>
<svg style="left:1248px;top:100px" width="18" height="18" viewBox="0 0 18 18"><path d="M0 6H3.5L9 1V17L3.5 12H0z" fill="#FFF"/><path d="M11 5A4.5 4.5 0 0 1 11 13" fill="none" stroke="#FFF" stroke-width="1.8"/><path d="M11.5 1.2A8 8 0 0 1 11.5 16.8" fill="none" stroke="#FFF" stroke-width="1.8"/></svg>
<svg style="left:1250px;top:145px" width="14" height="16" viewBox="0 0 14 16"><path d="M0 5H3L8 0.5V15.5L3 11H0z" fill="#FFF"/><path d="M9.5 4.5A3.5 3.5 0 0 1 9.5 11.5z" fill="#FFF"/></svg>
<svg style="left:1244.4px;top:185px" width="26" height="26" viewBox="0 0 26 26"><rect x="7.6" y="4.1" width="9.6" height="17.2" rx="1.6" transform="rotate(-45 12.4 12.7)" fill="none" stroke="#FFF" stroke-width="2.4"/><path d="M13.2 0.9A11.8 11.8 0 0 1 24.2 11.6" fill="none" stroke="#FFF" stroke-width="1.5"/><path d="M12 0.2L15.2 0.4 14.2 3.2z" fill="#FFF"/></svg>
<svg style="left:1244.6px;top:229.2px" width="26" height="26" viewBox="0 0 26 26"><rect x="7.6" y="4.1" width="9.6" height="17.2" rx="1.6" transform="rotate(45 12.4 12.7)" fill="none" stroke="#FFF" stroke-width="2.4"/><path d="M11.6 0.9A11.8 11.8 0 0 0 0.6 11.6" fill="none" stroke="#FFF" stroke-width="1.5"/><path d="M12.8 0.2L9.6 0.4 10.6 3.2z" fill="#FFF"/></svg>
<svg style="left:1247px;top:275px" width="20" height="18" viewBox="0 0 20 18"><path d="M0 4.5Q0 3 1.5 3H5L6.5 0.5H13.5L15 3H18.5Q20 3 20 4.5V16.5Q20 18 18.5 18H1.5Q0 18 0 16.5z" fill="#FFF"/><circle cx="10" cy="10.5" r="4.6" fill="#263238"/><circle cx="10" cy="10.5" r="2.9" fill="#FFF"/></svg>
<svg style="left:1248px;top:320px" width="18" height="18" viewBox="0 0 18 18"><circle cx="7" cy="7" r="6" fill="none" stroke="#FFF" stroke-width="1.6"/><path d="M7 4V10M4 7H10" stroke="#FFF" stroke-width="1.4"/><path d="M11.2 11.2L17 17" stroke="#FFF" stroke-width="2"/></svg>
<svg style="left:1249px;top:364px" width="16" height="18" viewBox="0 0 16 18"><path d="M14.5 1.5V16.5L1.5 9z" fill="none" stroke="#FFF" stroke-width="1.6" stroke-linejoin="round"/></svg>
<svg style="left:1248px;top:408px" width="18" height="18" viewBox="0 0 18 18"><circle cx="9" cy="9" r="7.8" fill="none" stroke="#FFF" stroke-width="1.6"/></svg>
<svg style="left:1249px;top:453px" width="16" height="16" viewBox="0 0 16 16"><rect x="1" y="1" width="14" height="14" rx="1" fill="none" stroke="#FFF" stroke-width="1.6"/></svg>
<svg style="left:1249px;top:501px" width="16" height="6" viewBox="0 0 16 6"><circle cx="2.5" cy="3" r="2" fill="#FFF"/><circle cx="8" cy="3" r="2" fill="#FFF"/><circle cx="13.5" cy="3" r="2" fill="#FFF"/></svg>
<svg style="left:0;top:0" width="1287" height="952" viewBox="0 0 1287 952"><path d="M48 581C41 596 31 612 28.5 620C26.5 626 30 629 37 627C48 623 60 617 71 613.5" fill="none" stroke="#E8191C" stroke-width="3" stroke-linecap="round"/><path d="M85 582.5L41 612" fill="none" stroke="#E8191C" stroke-width="3" stroke-linecap="round"/></svg>
</body></html>
